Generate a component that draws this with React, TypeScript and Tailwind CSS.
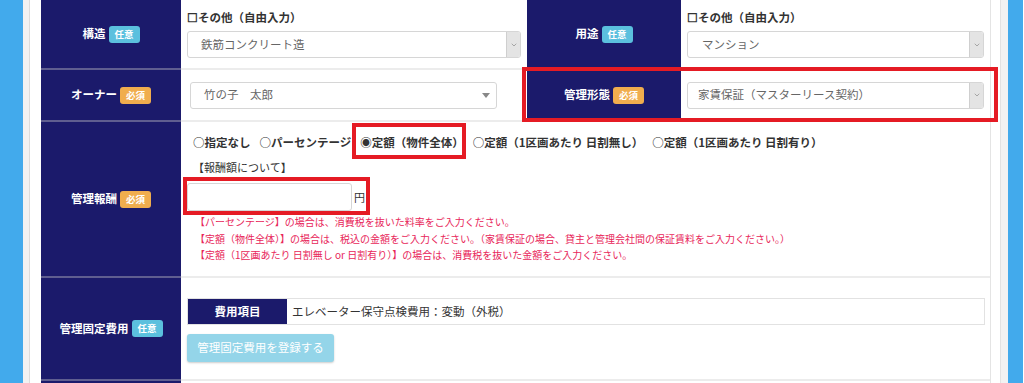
import { ChevronDown } from "lucide-react";

type Kind = "required" | "optional";

const Badge = ({ kind }: { kind: Kind }) => (
  <span
    className={`inline-flex h-[17px] w-[31px] items-center justify-center rounded-[3px] text-[9.5px] font-bold text-white ${
      kind === "required" ? "bg-[#f0ad4e]" : "bg-[#5bc0de]"
    }`}
  >
    {kind === "required" ? "必須" : "任意"}
  </span>
);

const HeadCell = ({
  label,
  kind,
  className,
}: {
  label: string;
  kind: Kind;
  className: string;
}) => (
  <div
    className={`flex shrink-0 items-center justify-center gap-[3px] border-b-2 border-[#5f5e90] bg-[#1b1a6b] ${className}`}
  >
    <span className="text-[11.5px] font-bold text-white">{label}</span>
    <Badge kind={kind} />
  </div>
);

const SelectBox = ({
  value,
  arrow,
  pad = "pl-[13px]",
}: {
  value: string;
  arrow: "box" | "caret";
  pad?: string;
}) => (
  <div className="flex h-[27px] items-stretch overflow-hidden rounded-[3px] border border-[#d6d6d6] bg-white">
    <span className={`flex flex-1 items-center text-[11.5px] text-[#666] ${pad}`}>
      {value}
    </span>
    {arrow === "box" ? (
      <span className="flex w-[14px] items-center justify-center border-l border-[#cfcfcf] bg-[#e4e4e4]">
        <ChevronDown size={8} strokeWidth={1.5} className="text-[#666]" />
      </span>
    ) : (
      <span className="flex items-center pr-[6px]">
        <svg width="8" height="5" viewBox="0 0 8 5">
          <path d="M0 0 L8 0 L4 5 Z" fill="#888" />
        </svg>
      </span>
    )}
  </div>
);

const radios = [
  { label: "指定なし", checked: false },
  { label: "パーセンテージ", checked: false },
  { label: "定額（物件全体）", checked: true },
  { label: "定額（1区画あたり 日割無し）", checked: false },
  { label: "定額（1区画あたり 日割有り）", checked: false },
];

const notes = [
  "【パーセンテージ】の場合は、消費税を抜いた料率をご入力ください。",
  "【定額（物件全体）】の場合は、税込の金額をご入力ください。（家賃保証の場合、貸主と管理会社間の保証賃料をご入力ください。）",
  "【定額（1区画あたり 日割無し or 日割有り）】の場合は、消費税を抜いた金額をご入力ください。",
];

function App() {
  return (
    <div className="flex h-[383px] w-[1024px] overflow-hidden bg-white font-['Noto_Sans_CJK_JP',sans-serif] text-[#333]">
      <div className="w-[23px] shrink-0 bg-[#42aaec]" />
      <div className="w-[6px] shrink-0 bg-[#f2f2f2]" />
      <div className="w-px shrink-0 bg-[#dcdcdc]" />
      <div className="w-[11px] shrink-0 bg-white" />

      <div className="flex w-[950px] shrink-0 flex-col border-r border-[#e4e4e4]">
        {/* 構造 / 用途 */}
        <div className="flex h-[70px] shrink-0">
          <HeadCell label="構造" kind="optional" className="w-[140px]" />
          <div className="w-[346px] border-b-2 border-[#ececec] px-[6px] pt-[9px]">
            <p className="mb-[6px] h-[16px] text-[11.5px] font-bold leading-[16px]">☐その他（自由入力）</p>
            <SelectBox value="鉄筋コンクリート造" arrow="box" />
          </div>
          <HeadCell label="用途" kind="optional" className="w-[154px]" />
          <div className="flex-1 border-b-2 border-[#ececec] px-[6px] pt-[9px]">
            <p className="mb-[6px] h-[16px] text-[11.5px] font-bold leading-[16px]">☐その他（自由入力）</p>
            <SelectBox value="マンション" arrow="box" pad="pl-[14px]" />
          </div>
        </div>

        {/* オーナー / 管理形態 */}
        <div className="relative flex h-[52px] shrink-0">
          <HeadCell label="オーナー" kind="required" className="w-[140px]" />
          <div className="flex w-[346px] items-center border-b-2 border-[#ececec] pl-[9px]">
            <div className="w-[307px]">
              <SelectBox value="竹の子　太郎" arrow="caret" />
            </div>
          </div>
          <HeadCell label="管理形態" kind="required" className="w-[154px]" />
          <div className="flex flex-1 items-center border-b-2 border-[#ececec] px-[6px]">
            <div className="w-full">
              <SelectBox value="家賃保証（マスターリース契約）" arrow="box" pad="pl-[10px]" />
            </div>
          </div>
          <div className="pointer-events-none absolute -top-[3px] bottom-0 left-[481px] -right-[8px] border-4 border-[#e51b24]" />
        </div>

        {/* 管理報酬 */}
        <div className="flex h-[156px] shrink-0">
          <HeadCell label="管理報酬" kind="required" className="w-[140px]" />
          <div className="flex flex-1 flex-col border-b-2 border-[#ececec] pl-[6px] pt-[12px]">
            <div className="ml-[6px] flex h-[16px] items-center gap-[9px] text-[11.5px] font-bold leading-[16px]">
              {radios.map((r) => (
                <span key={r.label} className="relative whitespace-nowrap">
                  {r.checked ? "◉" : "○"}
                  {r.label}
                  {r.checked && (
                    <span className="pointer-events-none absolute -top-[11px] -bottom-[9px] -left-[8px] -right-[2px] border-4 border-[#e51b24]" />
                  )}
                </span>
              ))}
            </div>
            <p className="ml-[6px] mt-[9px] h-[16px] text-[11px] leading-[16px] text-[#333]">【報酬額について】</p>
            <div className="relative mt-[8px] flex w-fit items-center">
              <div className="h-[28px] w-[165px] rounded-[3px] border border-[#d6d6d6] bg-white" />
              <span className="ml-[2px] text-[11px]">円</span>
              <span className="pointer-events-none absolute -top-[6px] -bottom-[4px] -left-[4px] -right-[5px] border-4 border-[#e51b24]" />
            </div>
            <div className="ml-[8px] mt-[3px] flex flex-col text-[10px] leading-[16.5px] text-[#e8265a]">
              {notes.map((n) => (
                <p key={n} className="whitespace-nowrap">
                  {n}
                </p>
              ))}
            </div>
          </div>
        </div>

        {/* 管理固定費用 */}
        <div className="flex h-[103px] shrink-0">
          <HeadCell label="管理固定費用" kind="optional" className="w-[140px]" />
          <div className="flex flex-1 flex-col border-b-2 border-[#ececec] pl-[6px] pr-[5px] pt-[20px]">
            <div className="flex h-[27px] border border-[#e2e2e2]">
              <span className="flex w-[99px] items-center justify-center bg-[#1b1a6b] text-[11.5px] font-bold text-white">
                費用項目
              </span>
              <span className="flex items-center pl-[5px] text-[11.5px] text-[#333]">
                エレベーター保守点検費用：変動（外税）
              </span>
            </div>
            <button className="mt-[9px] h-[28px] w-[147px] rounded-[3px] bg-[#5bc0de] text-[11.5px] text-white opacity-65 shadow-[0_1px_2px_rgba(0,0,0,0.3)]">
              管理固定費用を登録する
            </button>
          </div>
        </div>

        <div className="flex h-[40px] shrink-0">
          <div className="w-[140px] bg-[#1b1a6b]" />
          <div className="flex-1" />
        </div>
      </div>

      <div className="w-[9px] shrink-0 bg-white" />
      <div className="w-px shrink-0 bg-[#e2e2e2]" />
      <div className="w-[7px] shrink-0 bg-[#f2f2f2]" />
      <div className="w-[15px] shrink-0 bg-[#42aaec]" />
    </div>
  );
}

export default App;
